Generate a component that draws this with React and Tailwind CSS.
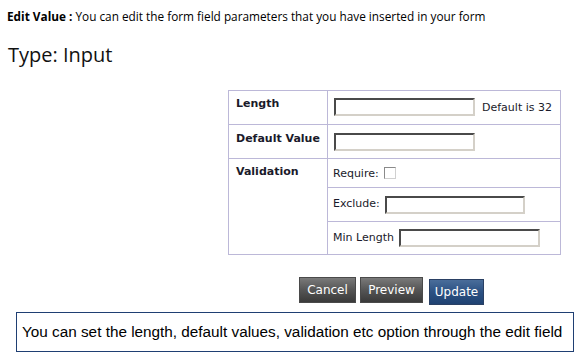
const inputCls =
  'h-[18px] bg-white border-2 border-t-[#4a4a4a] border-l-[#4a4a4a] border-b-[#d4d0c8] border-r-[#d4d0c8] outline-none';

const grayBtn =
  'h-[26px] px-0 text-white text-[12px] bg-gradient-to-b from-[#7a7a7a] via-[#555555] to-[#3a3a3a] border border-[#4a4a4a]';

export default function App() {
  return (
    <div className="w-[579px] h-[360px] bg-white overflow-hidden text-black">
      <p className="pl-[7px] pt-[8px] h-[24px] text-[11.8px] leading-[16px] whitespace-nowrap font-['Open_Sans',sans-serif]">
        <span className="font-bold">Edit Value : </span>
        You can edit the form field parameters that you have inserted in your form
      </p>

      <h1 className="pl-[8px] mt-[16px] h-[30px] text-[20px] leading-[30px] text-[#111] font-['Open_Sans',sans-serif]">
        Type: Input
      </h1>

      <div className="ml-[228px] mt-[20px] w-[333px] border border-[#bcb8d8] text-[11px] text-[#1a1a2a] font-['DejaVu_Sans',sans-serif]">
        {/* Length */}
        <div className="flex h-[34px] border-b border-[#bcb8d8]">
          <div className="w-[99px] border-r border-[#bcb8d8] pl-[7px] pt-[5px] font-bold">Length</div>
          <div className="flex-1 flex items-start pl-[6px] pt-[7px]">
            <input className={`${inputCls} w-[141px]`} />
            <span className="ml-[7px] mt-[2px]">Default is 32</span>
          </div>
        </div>

        {/* Default value */}
        <div className="flex h-[34px] border-b border-[#bcb8d8]">
          <div className="w-[99px] border-r border-[#bcb8d8] pl-[7px] pt-[6px] font-bold">Default Value</div>
          <div className="flex-1 flex items-start pl-[6px] pt-[8px]">
            <input className={`${inputCls} w-[141px]`} />
          </div>
        </div>

        {/* Validation */}
        <div className="flex h-[95px]">
          <div className="w-[99px] border-r border-[#bcb8d8] pl-[7px] pt-[5px] font-bold">Validation</div>
          <div className="flex-1 flex flex-col">
            <div className="h-[29px] border-b border-[#bcb8d8] flex items-center pl-[5px] pt-[3px]">
              <span>Require:</span>
              <span className="ml-[5px] mb-[4px] w-[12px] h-[12px] border border-[#8a8a8a] border-b-[#d0d0d0] border-r-[#d0d0d0] bg-white" />
            </div>
            <div className="h-[34px] border-b border-[#bcb8d8] flex items-center pl-[5px]">
              <span>Exclude:</span>
              <input className={`${inputCls} ml-[5px] w-[140px]`} />
            </div>
            <div className="h-[32px] flex items-center pl-[5px]">
              <span>Min Length</span>
              <input className={`${inputCls} ml-[5px] w-[141px]`} />
            </div>
          </div>
        </div>
      </div>

      <div className="flex items-start pl-[299px] mt-[22px] h-[28px] font-['DejaVu_Sans',sans-serif]">
        <button className={`${grayBtn} w-[57px]`}>Cancel</button>
        <button className={`${grayBtn} w-[63px] ml-[4px]`}>Preview</button>
        <button className="ml-[6px] mt-[2px] w-[55px] h-[26px] text-white text-[12px] bg-gradient-to-b from-[#4a6d9a] via-[#2c5183] to-[#1f4272] border border-[#2a4064]">
          Update
        </button>
      </div>

      <div className="ml-[16px] mt-[7px] w-[558px] h-[40px] border border-[#1f3f73] flex items-center pl-[5px] text-[15.3px] whitespace-nowrap font-['Liberation_Sans',Arial,sans-serif]">
        You can set the length, default values, validation etc option through the edit field
      </div>
    </div>
  );
}
